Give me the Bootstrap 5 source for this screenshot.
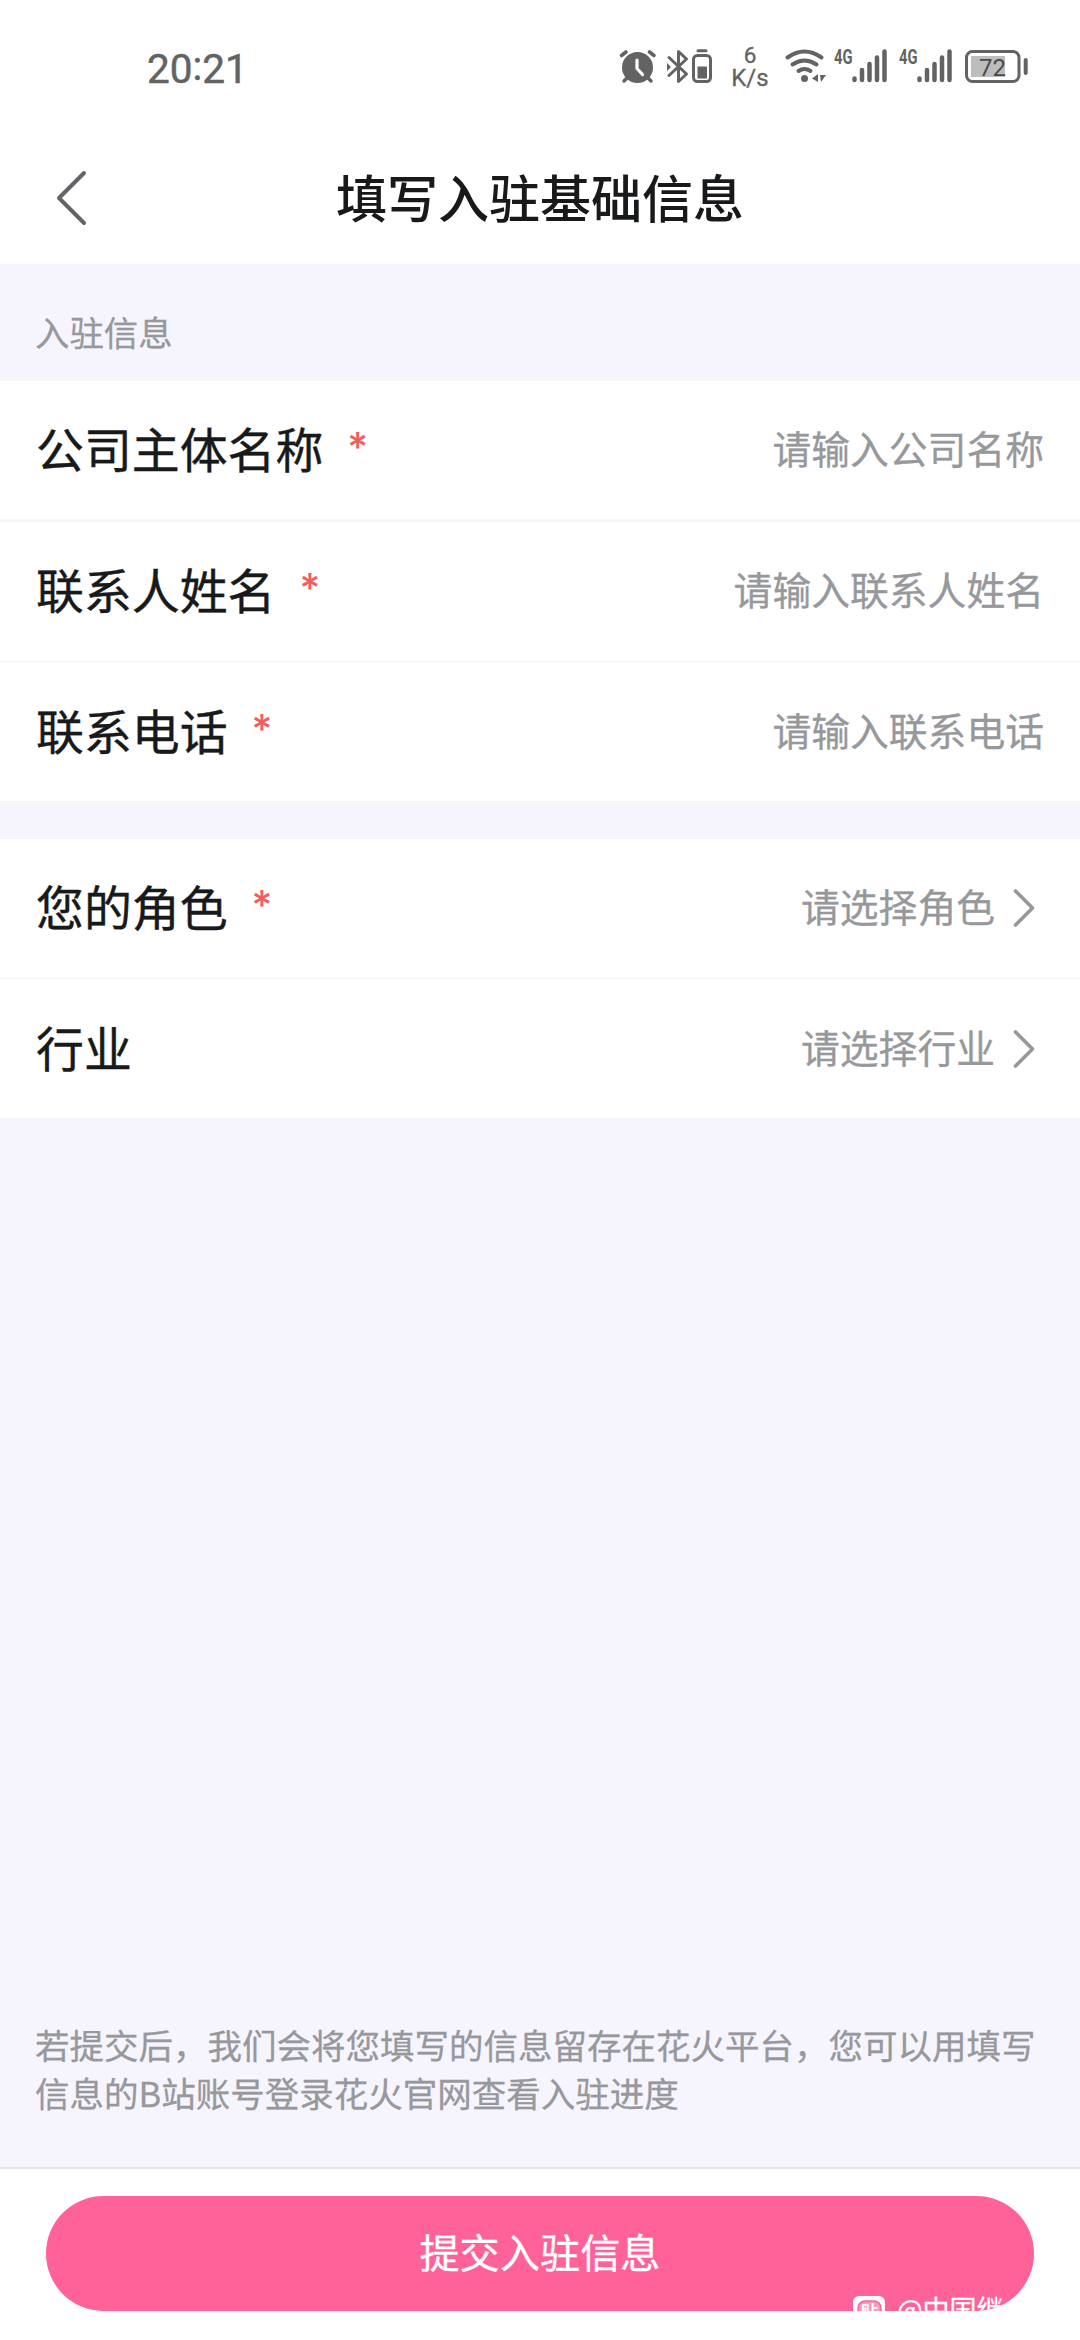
<!DOCTYPE html>
<html lang="zh-CN">
<head>
<meta charset="utf-8">
<meta name="viewport" content="width=device-width, initial-scale=1">
<title>填写入驻基础信息</title>
<link href="https://cdn.jsdelivr.net/npm/bootstrap@5.3.0/dist/css/bootstrap.min.css" rel="stylesheet">
<style>
  body { font-family: "Noto Sans CJK SC", sans-serif; background: #f6f5fe; color: #18191b; height: 2340px; overflow: hidden; }
  .status-bar { height: 132px; padding: 44px 48px 0 147px; color: #636363; }
  .clock { font: 400 40.5px/46px Roboto, sans-serif; padding-top: 2px; -webkit-text-stroke: .5px #636363; }
  .clock i { font-style: normal; position: relative; top: -3px; }
  .status-icons svg { display: block; height: 44px; overflow: visible; }
  .title-bar { height: 132px; padding: 0 54px; }
  .title-bar h1 { font-size: 51px; font-weight: 500; line-height: 132px; padding-bottom: 5px; }
  .section-label { height: 117px; padding: 41px 35px 0; font-size: 34.4px; line-height: 52px; color: #97989c; -webkit-text-stroke: .3px; }
  .form-row { height: 141px; padding: 0 36px 5px; border-bottom: 3px solid #f8f8fb; }
  .form-group-block .form-row:last-child { border-bottom: 0; height: 138px; }
  .pick-block { margin-top: 38px; }
  .field-name { font-size: 47.9px; line-height: 1; -webkit-text-stroke: .4px; }
  .req { font-family: Inter, sans-serif; font-size: 40px; font-weight: 500; line-height: 48px; color: #f25d5d; margin-left: 24px; margin-top: -1px; }
  .hint { font-size: 38.8px; line-height: 1; color: #97989c; -webkit-text-stroke: .3px; }
  .chev { margin: 5px 0 0 17px; }
  .notice { font-size: 34.5px; line-height: 48px; color: #97989c; padding: 0 30px 51px 35px; -webkit-text-stroke: .3px; }
  .action-bar { height: 173px; border-top: 2px solid #e6e5ee; padding: 27px 46px 0; }
  .submit { height: 115px; font-size: 40.2px; line-height: 110px; padding: 0 0 5px; background: #ff6199; border: 0; color: #fff; -webkit-text-stroke: .3px; }
  .submit:hover { background: #ff6199; color: #fff; }
  .stamp { left: 807px; top: 100px; font-size: 27px; line-height: 26px; }
</style>
</head>
<body class="d-flex flex-column">
<header class="bg-white">
  <div class="status-bar d-flex justify-content-between align-items-start">
    <div class="clock">20<i>:</i>21</div>
    <div class="status-icons d-flex" aria-hidden="true">
      <svg width="42" viewBox="616 44 42 44" fill="none" stroke="#636363" stroke-linecap="round">
        <circle cx="637.5" cy="67.5" r="15.5" fill="#636363" stroke="none"/>
        <path d="M621.5 55.5l4.5-3.5M649.500 52l4.500 3.500" stroke-width="3.600"/>
        <path d="M628 77l-4 4M647 77l4 4" stroke-width="3.500"/>
        <path d="M637 60v8.500l5.500 6" stroke="#fff" stroke-width="3.200" stroke-linejoin="round"/>
      </svg>
      <svg width="32" viewBox="658 44 32 44" fill="none" stroke="#636363" stroke-width="3" stroke-linecap="round" stroke-linejoin="round">
        <path d="M669 57.500l17.500 16.500-8 7.500v-30l8 7.500-17.500 16.500"/><path d="M667 63l4 4-4 4z" fill="#636363" stroke="none"/>
      </svg>
      <svg width="38" viewBox="690 44 38 44" fill="none" stroke="#636363">
        <rect x="693.500" y="55.500" width="17" height="26" rx="4" stroke-width="3"/>
        <path d="M698 50.800h8" stroke-width="3" stroke-linecap="round"/><path d="M697.500 66.500h9.500v12h-9.500z" fill="#636363" stroke="none"/>
      </svg>
      <svg width="52" viewBox="728 44 52 44" fill="#636363" stroke="#636363" stroke-width=".3" font-family="Roboto, sans-serif" text-anchor="middle">
        <text x="750" y="63" font-size="22.500">6</text><text x="750" y="86" font-size="24">K/s</text>
      </svg>
      <svg width="52" viewBox="780 44 52 44" fill="none" stroke="#636363" stroke-width="4" stroke-linecap="round">
        <path d="M787.500 57.500Q804.500 45.500 821.500 57.500M792.500 64.500Q804.500 56.500 816.500 64.500M798.500 71Q804.500 67 810.500 71"/>
        <circle cx="804.500" cy="78.500" r="3.500" fill="#636363" stroke="none"/>
        <path d="M812 78.500l6-4.500v8zM820 75h6l-5 7z" fill="#636363" stroke="none"/>
      </svg>
      <svg width="65" viewBox="832 44 65 44">
        <text x="834" y="63.500" font-family="Roboto, sans-serif" font-weight="700" font-size="19.500" textLength="18.500" lengthAdjust="spacingAndGlyphs" fill="#636363">4G</text>
        <path d="M854.500 78.500v1.500M862 70v10M869.500 64v16M877 57.500v22.500M884.500 51.500v28.500" stroke="#636363" stroke-width="4.500" stroke-linecap="round"/>
      </svg>
      <svg width="65" viewBox="832 44 65 44">
        <text x="834" y="63.500" font-family="Roboto, sans-serif" font-weight="700" font-size="19.500" textLength="18.500" lengthAdjust="spacingAndGlyphs" fill="#636363">4G</text>
        <path d="M854.500 78.500v1.500M862 70v10M869.500 64v16M877 57.500v22.500M884.500 51.500v28.500" stroke="#636363" stroke-width="4.500" stroke-linecap="round"/>
      </svg>
      <svg width="70" viewBox="962 44 70 44">
        <rect x="966.500" y="51.500" width="52.500" height="30" rx="6" fill="none" stroke="#636363" stroke-width="3"/>
        <path d="M971 56h34v21h-34z" fill="#bebdbe"/><path d="M1025.700 60v13" stroke="#636363" stroke-width="4" stroke-linecap="round"/>
        <text x="992.500" y="76" text-anchor="middle" font-family="Roboto, sans-serif" font-size="24" fill="#4a4a4a">72</text>
      </svg>
    </div>
  </div>
  <nav class="title-bar d-flex align-items-center">
    <svg width="34" height="58" viewBox="0 0 34 58" fill="none" stroke="#636468" stroke-width="4" stroke-linecap="round" stroke-linejoin="round"><path d="M30 4L5 29l25 25"/></svg>
    <h1 class="flex-grow-1 text-center m-0">填写入驻基础信息</h1>
    <div style="width:34px"></div>
  </nav>
</header>
<main class="flex-grow-1 d-flex flex-column">
  <div class="section-label">入驻信息</div>
  <section class="form-group-block bg-white">
    <div class="form-row d-flex align-items-center justify-content-between"><div class="d-flex"><span class="field-name">公司主体名称</span><span class="req">*</span></div><span class="hint">请输入公司名称</span></div>
    <div class="form-row d-flex align-items-center justify-content-between"><div class="d-flex"><span class="field-name">联系人姓名</span><span class="req">*</span></div><span class="hint">请输入联系人姓名</span></div>
    <div class="form-row d-flex align-items-center justify-content-between"><div class="d-flex"><span class="field-name">联系电话</span><span class="req">*</span></div><span class="hint">请输入联系电话</span></div>
  </section>
  <section class="form-group-block pick-block bg-white">
    <div class="form-row d-flex align-items-center justify-content-between"><div class="d-flex"><span class="field-name">您的角色</span><span class="req">*</span></div>
      <div class="d-flex align-items-center"><span class="hint">请选择角色</span><svg class="chev" width="32" height="40" viewBox="0 0 32 40" fill="none" stroke="#97989c" stroke-width="3.600" stroke-linecap="round" stroke-linejoin="round"><path d="M3.500 3L20.500 20 3.500 37"/></svg></div></div>
    <div class="form-row d-flex align-items-center justify-content-between"><span class="field-name">行业</span>
      <div class="d-flex align-items-center"><span class="hint">请选择行业</span><svg class="chev" width="32" height="40" viewBox="0 0 32 40" fill="none" stroke="#97989c" stroke-width="3.600" stroke-linecap="round" stroke-linejoin="round"><path d="M3.500 3L20.500 20 3.500 37"/></svg></div></div>
  </section>
  <p class="notice mt-auto mb-0">若提交后，我们会将您填写的信息留存在花火平台，您可以用填写<br>信息的B站账号登录花火官网查看入驻进度</p>
</main>
<footer class="action-bar bg-white">
  <button type="button" class="submit btn w-100 rounded-pill position-relative overflow-hidden">提交入驻信息
    <span class="stamp position-absolute d-flex text-nowrap">
      <svg class="me-2" width="32" height="32" viewBox="0 0 32 32"><rect width="32" height="32" rx="6" fill="#fff"/><path d="M5 27V13Q5 5 13 5h7q8 0 8 8v14" fill="#f79abd" stroke="#ff6199" stroke-width="1.500"/><text x="16.500" y="22" font-size="17" text-anchor="middle" font-weight="700" fill="#fff">贴</text></svg>
      <span class="ms-1">@中国继</span>
    </span>
  </button>
</footer>
<script src="https://cdn.jsdelivr.net/npm/bootstrap@5.3.0/dist/js/bootstrap.bundle.min.js"></script>
</body>
</html>
